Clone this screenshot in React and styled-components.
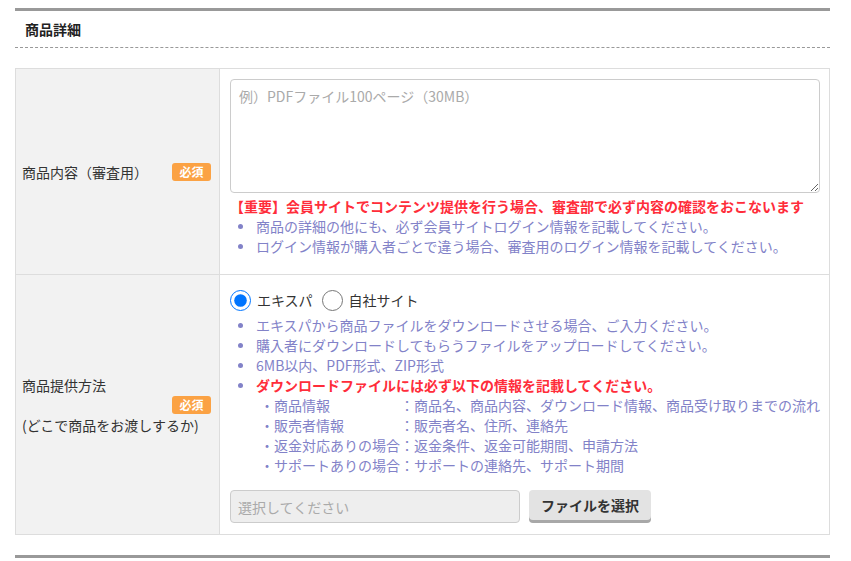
import React from 'react';
import styled, { createGlobalStyle } from 'styled-components';

const GlobalStyle = createGlobalStyle`
  body {
    margin: 0;
    background: #fff;
    font-family: "Noto Sans CJK JP", "Noto Sans", sans-serif;
    font-size: 14px;
    color: #333;
  }
`;

const Section = styled.section`
  margin: 0 21px 0 15px;
  padding-top: 8px;
`;

const Header = styled.div`
  border-top: 3px solid #999;
  border-bottom: 1px dashed #999;
  padding: 8px 10px 8px;

  h2 {
    margin: 0;
    font-size: 14px;
    font-weight: 700;
    line-height: 20px;
    color: #222;
  }
`;

const Table = styled.div`
  margin-top: 20px;
  display: grid;
  grid-template-columns: 204px 1fr;
  border: 1px solid #ddd;
`;

const Label = styled.div`
  position: relative;
  display: flex;
  align-items: center;
  padding: 0 6px;
  background: #f2f2f2;
  border-right: 1px solid #ddd;
  border-bottom: ${({ last }) => (last ? 'none' : '1px solid #ddd')};
  line-height: 20px;
  color: #333;
`;

const Badge = styled.span`
  position: absolute;
  right: 8px;
  top: 50%;
  transform: translateY(-50%);
  width: 39px;
  height: 18px;
  border-radius: 3px;
  background: #fba244;
  color: #fff;
  font-size: 12px;
  font-weight: 700;
  line-height: 18px;
  text-align: center;
`;

const Cell = styled.div`
  padding: ${({ pad }) => pad};
  border-bottom: ${({ last }) => (last ? 'none' : '1px solid #ddd')};
  line-height: 20px;
`;

const TextArea = styled.textarea`
  display: block;
  box-sizing: border-box;
  width: 590px;
  height: 114px;
  padding: 6px 8px;
  border: 1px solid #ccc;
  border-radius: 4px;
  font-family: inherit;
  font-size: 14px;
  line-height: 20px;
  color: #333;
  resize: vertical;

  &::placeholder {
    color: #aaa;
  }
`;

const Alert = styled.p`
  margin: 3px 0 0;
  color: #ff2d3a;
  font-weight: 700;
`;

const Notes = styled.ul`
  margin: 0;
  padding: 0;
  list-style: none;
`;

const Note = styled.li`
  position: relative;
  padding-left: 26px;
  color: ${({ alert }) => (alert ? '#ff2d3a' : '#8282c8')};
  font-weight: ${({ alert }) => (alert ? 700 : 400)};

  &::before {
    content: '';
    position: absolute;
    left: 8px;
    top: 8px;
    width: 5px;
    height: 5px;
    border-radius: 50%;
    background: #8282c8;
  }
`;

const SubList = styled.div`
  display: grid;
  grid-template-columns: 140px auto;
  justify-content: start;
  padding-left: 30px;
  color: #8282c8;
`;

const RadioRow = styled.div`
  display: flex;
  align-items: center;
  height: 22px;
  margin-bottom: 4px;

  label {
    display: flex;
    align-items: center;
    gap: 6px;
    margin-right: 9px;
    color: #333;
  }

  input {
    margin: 0;
    width: 21px;
    height: 21px;
  }
`;

const FileRow = styled.div`
  display: flex;
  align-items: flex-start;
  gap: 9px;
  margin-top: 15px;
`;

const FileName = styled.div`
  box-sizing: border-box;
  width: 290px;
  height: 33px;
  padding: 6px 7px;
  border: 1px solid #ccc;
  border-radius: 4px;
  background: #eee;
  color: #aaa;
`;

const FileButton = styled.button`
  box-sizing: border-box;
  width: 122px;
  height: 30px;
  border: none;
  border-radius: 4px;
  background: #e3e3e3;
  box-shadow: 0 3px 0 #a8a8a8;
  font-family: inherit;
  font-size: 14px;
  font-weight: 700;
  color: #333;
`;

const Footer = styled.div`
  margin-top: 20px;
  border-top: 3px solid #999;
`;

const subItems = [
  ['・商品情報', '：商品名、商品内容、ダウンロード情報、商品受け取りまでの流れ'],
  ['・販売者情報', '：販売者名、住所、連絡先'],
  ['・返金対応ありの場合', '：返金条件、返金可能期間、申請方法'],
  ['・サポートありの場合', '：サポートの連絡先、サポート期間'],
];

export default function App() {
  return (
    <>
      <GlobalStyle />
      <Section>
        <Header>
          <h2>商品詳細</h2>
        </Header>
        <Table>
          <Label>
            商品内容（審査用）
            <Badge>必須</Badge>
          </Label>
          <Cell pad="10px 10px 18px">
            <TextArea placeholder="例）PDFファイル100ページ（30MB）" />
            <Alert>【重要】会員サイトでコンテンツ提供を行う場合、審査部で必ず内容の確認をおこないます</Alert>
            <Notes>
              <Note>商品の詳細の他にも、必ず会員サイトログイン情報を記載してください。</Note>
              <Note>ログイン情報が購入者ごとで違う場合、審査用のログイン情報を記載してください。</Note>
            </Notes>
          </Cell>

          <Label last>
            <div>
              商品提供方法
              <br />
              <br />
              (どこで商品をお渡しするか)
            </div>
            <Badge>必須</Badge>
          </Label>
          <Cell pad="14px 10px 11px" last>
            <RadioRow>
              <label>
                <input type="radio" name="method" defaultChecked />
                エキスパ
              </label>
              <label>
                <input type="radio" name="method" />
                自社サイト
              </label>
            </RadioRow>
            <Notes>
              <Note>エキスパから商品ファイルをダウンロードさせる場合、ご入力ください。</Note>
              <Note>購入者にダウンロードしてもらうファイルをアップロードしてください。</Note>
              <Note>6MB以内、PDF形式、ZIP形式</Note>
              <Note alert>ダウンロードファイルには必ず以下の情報を記載してください。</Note>
            </Notes>
            <SubList>
              {subItems.map(([k, v]) => (
                <React.Fragment key={k}>
                  <span>{k}</span>
                  <span>{v}</span>
                </React.Fragment>
              ))}
            </SubList>
            <FileRow>
              <FileName>選択してください</FileName>
              <FileButton>ファイルを選択</FileButton>
            </FileRow>
          </Cell>
        </Table>
        <Footer />
      </Section>
    </>
  );
}
